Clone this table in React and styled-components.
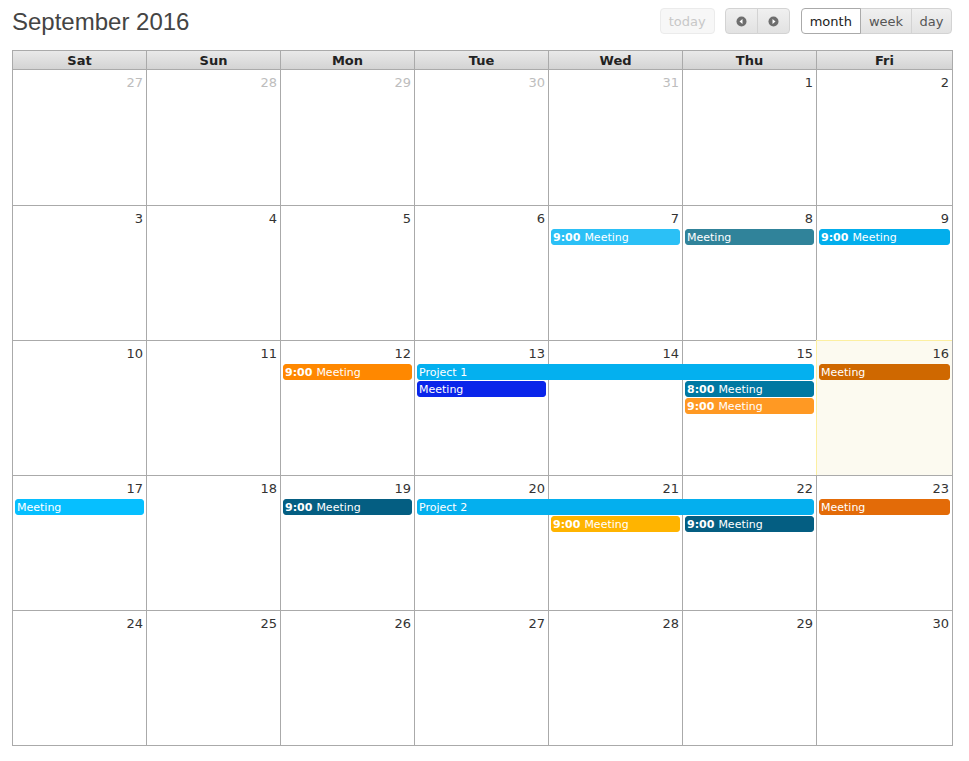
import React from 'react';
import styled, { createGlobalStyle, css } from 'styled-components';

const GlobalStyle = createGlobalStyle`
  html, body {
    margin: 0;
    padding: 0;
    background: #fff;
  }
  body {
    font-family: 'DejaVu Sans', Verdana, sans-serif;
    color: #333;
  }
`;

const Page = styled.div`
  width: 941px;
  padding: 7px 12px 0 12px;
`;

const Toolbar = styled.div`
  display: flex;
  align-items: flex-start;
  height: 43px;
`;

const Title = styled.h2`
  margin: 0;
  flex: 1;
  padding-top: 1px;
  font-family: 'Liberation Sans', Arial, sans-serif;
  font-weight: normal;
  font-size: 24px;
  color: #444;
`;

const Controls = styled.div`
  display: flex;
  margin-top: 1px;
  margin-right: 1px;
`;

const Group = styled.div`
  display: flex;
  margin-left: ${p => p.$gap || 0}px;
`;

const Button = styled.button`
  box-sizing: border-box;
  height: 26px;
  padding: 0 ${p => p.$pad || 8}px;
  font-family: 'DejaVu Sans', Verdana, sans-serif;
  font-size: 13px;
  color: #555;
  border: 1px solid #d3d3d3;
  background: linear-gradient(#f0f0f0, #e2e2e2);
  display: flex;
  align-items: center;
  justify-content: center;
  border-radius: 0;
  & + & {
    margin-left: -1px;
  }
  &:first-child {
    border-radius: 4px 0 0 4px;
  }
  &:last-child {
    border-radius: 0 4px 4px 0;
  }
  &:only-child {
    border-radius: 4px;
  }
  ${p => p.$active && css`
    background: #fff;
    border-color: #aaa;
    color: #212121;
    position: relative;
  `}
  ${p => p.$disabled && css`
    background: #f7f7f7;
    border-color: #ebebeb;
    color: #c8c8c8;
  `}
`;

const Calendar = styled.div`
  border-left: 1px solid #aaa;
  border-top: 1px solid #aaa;
`;

const COLS = 'repeat(6, 134px) 136px';

const HeadRow = styled.div`
  display: grid;
  grid-template-columns: ${COLS};
  background: linear-gradient(#e9e9e9, #d2d2d2);
`;

const HeadCell = styled.div`
  height: 18px;
  border-right: 1px solid #aaa;
  border-bottom: 1px solid #aaa;
  text-align: center;
  font-weight: bold;
  font-size: 13px;
  line-height: 20px;
  color: #222;
`;

const Week = styled.div`
  display: grid;
  grid-template-columns: ${COLS};
  grid-template-rows: 23px repeat(3, 17px) 1fr;
  height: ${p => (p.$first ? 136 : 135)}px;
`;

const Day = styled.div`
  grid-row: 1 / -1;
  grid-column: ${p => p.$col + 1};
  border-right: 1px solid #aaa;
  border-bottom: 1px solid #aaa;
  text-align: right;
  padding: 5px 3px 0 0;
  font-size: 13px;
  line-height: 15px;
  color: ${p => (p.$other ? '#bdbdbd' : '#333')};
  ${p => p.$today && css`
    background: #fcfaf0;
    box-shadow: -1px -1px 0 #fcefa1;
  `}
`;

const Event = styled.div`
  grid-row: ${p => p.$row + 2};
  grid-column: ${p => p.$col + 1} / span ${p => p.$span || 1};
  margin: 0 3px 1px 2px;
  height: 16px;
  box-sizing: border-box;
  border: 1px solid ${p => p.$color};
  background: ${p => p.$color};
  border-radius: 3px;
  color: #fff;
  font-size: 11px;
  line-height: 14px;
  padding: 1px 0 0 1px;
  white-space: nowrap;
  overflow: hidden;
  b {
    font-weight: bold;
    margin-right: 4px;
  }
`;

const Arrow = ({ dir }) => (
  <svg width="11" height="11" viewBox="0 0 11 11">
    <circle cx="5.5" cy="5.5" r="5" fill="#6e6e6e" />
    {dir === 'left'
      ? <path d="M3.5 5.5 L6.5 3 L6.5 8 Z" fill="#fff" />
      : <path d="M7.5 5.5 L4.5 3 L4.5 8 Z" fill="#fff" />}
  </svg>
);

const headers = ['Sat', 'Sun', 'Mon', 'Tue', 'Wed', 'Thu', 'Fri'];

const weeks = [
  {
    days: [27, 28, 29, 30, 31, 1, 2],
    other: 5,
    events: [],
  },
  {
    days: [3, 4, 5, 6, 7, 8, 9],
    events: [
      { col: 4, row: 0, time: '9:00', title: 'Meeting', color: '#2bc0f6' },
      { col: 5, row: 0, title: 'Meeting', color: '#30839a' },
      { col: 6, row: 0, time: '9:00', title: 'Meeting', color: '#03aeec' },
    ],
  },
  {
    days: [10, 11, 12, 13, 14, 15, 16],
    today: 6,
    events: [
      { col: 2, row: 0, time: '9:00', title: 'Meeting', color: '#ff8800' },
      { col: 3, row: 0, span: 3, title: 'Project 1', color: '#04b0ef' },
      { col: 3, row: 1, title: 'Meeting', color: '#0a25ea' },
      { col: 5, row: 1, time: '8:00', title: 'Meeting', color: '#0078a2' },
      { col: 5, row: 2, time: '9:00', title: 'Meeting', color: '#ff9923' },
      { col: 6, row: 0, title: 'Meeting', color: '#cf6800' },
    ],
  },
  {
    days: [17, 18, 19, 20, 21, 22, 23],
    events: [
      { col: 0, row: 0, title: 'Meeting', color: '#06bfff' },
      { col: 2, row: 0, time: '9:00', title: 'Meeting', color: '#045e82' },
      { col: 3, row: 0, span: 3, title: 'Project 2', color: '#04afee' },
      { col: 4, row: 1, time: '9:00', title: 'Meeting', color: '#ffb400' },
      { col: 5, row: 1, time: '9:00', title: 'Meeting', color: '#045e82' },
      { col: 6, row: 0, title: 'Meeting', color: '#e36b08' },
    ],
  },
  {
    days: [24, 25, 26, 27, 28, 29, 30],
    events: [],
  },
];

const App = () => {
  return (
    <Page>
      <GlobalStyle />
      <Toolbar>
        <Title>September 2016</Title>
        <Controls>
          <Group>
            <Button $disabled $pad={8}>today</Button>
          </Group>
          <Group $gap={10}>
            <Button $pad={10}><Arrow dir="left" /></Button>
            <Button $pad={10}><Arrow dir="right" /></Button>
          </Group>
          <Group $gap={11}>
            <Button $active $pad={8}>month</Button>
            <Button $pad={8}>week</Button>
            <Button $pad={7.5}>day</Button>
          </Group>
        </Controls>
      </Toolbar>
      <Calendar>
        <HeadRow>
          {headers.map(h => <HeadCell key={h}>{h}</HeadCell>)}
        </HeadRow>
        {weeks.map((w, wi) => (
          <Week key={wi} $first={wi === 0}>
            {w.days.map((d, i) => (
              <Day
                key={i}
                $col={i}
                $other={w.other !== undefined && i < w.other}
                $today={w.today === i}
              >
                {d}
              </Day>
            ))}
            {w.events.map((e, i) => (
              <Event key={i} $col={e.col} $row={e.row} $span={e.span} $color={e.color}>
                {e.time && <b>{e.time}</b>}
                {e.title}
              </Event>
            ))}
          </Week>
        ))}
      </Calendar>
    </Page>
  );
};

export default App;
